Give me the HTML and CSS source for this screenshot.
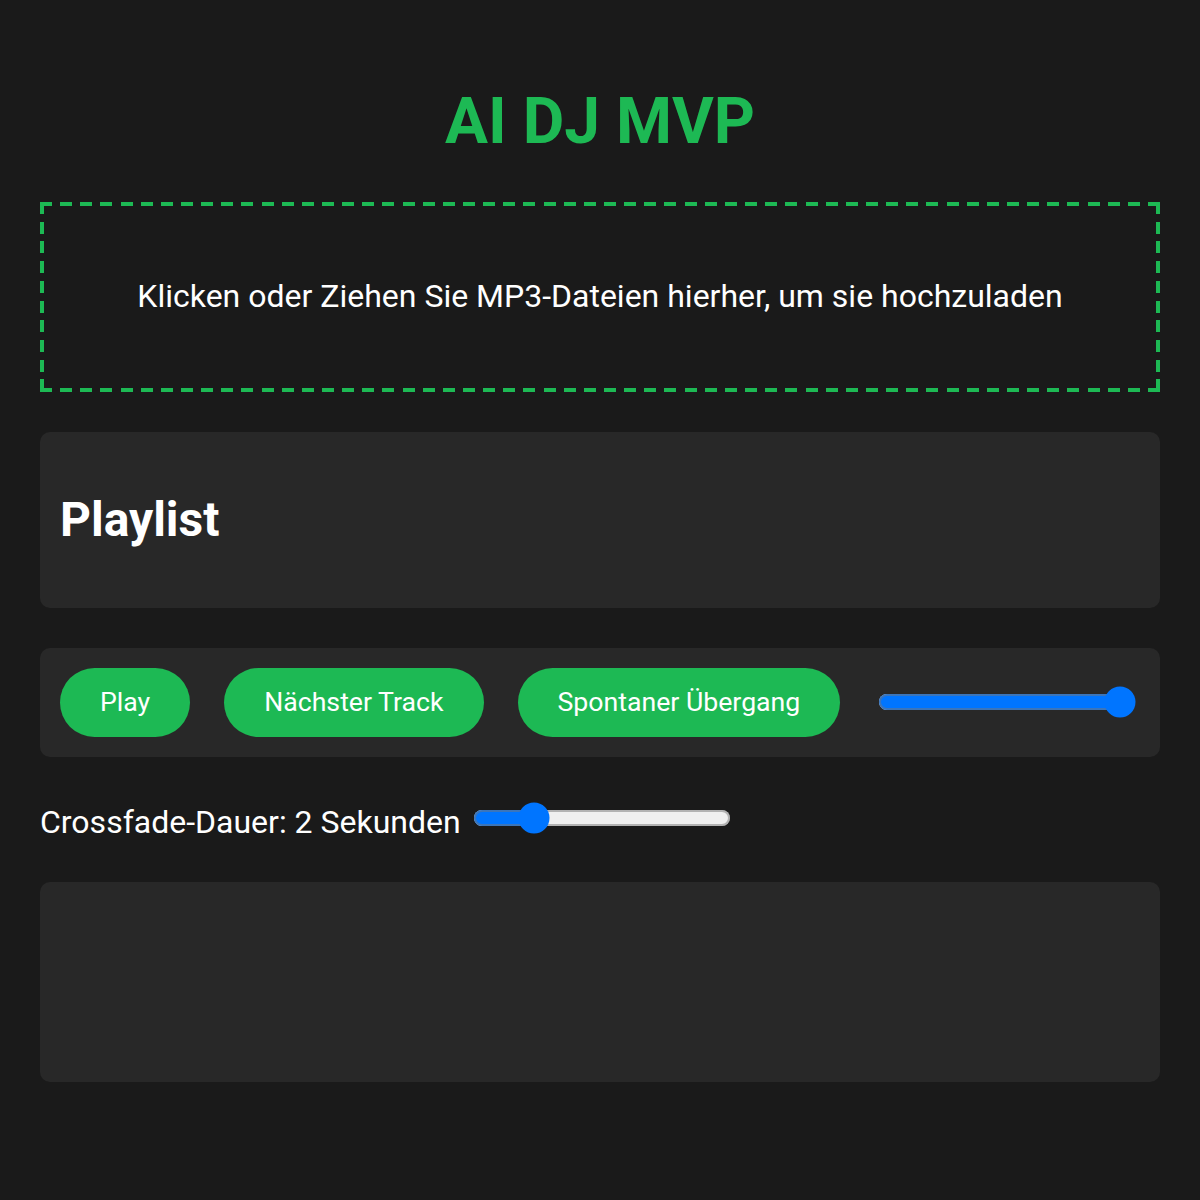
FILE: index.html
```html
<!DOCTYPE html>
<html lang="de">
<head>
<meta charset="utf-8">
<title>AI DJ MVP</title>
<link rel="stylesheet" href="styles.css">
</head>
<body>
<div class="app">
  <h1 class="title">AI DJ MVP</h1>
  <div class="dropzone">
    <p class="dropzone-text">Klicken oder Ziehen Sie MP3-Dateien hierher, um sie hochzuladen</p>
  </div>
  <section class="panel playlist">
    <h2 class="panel-title">Playlist</h2>
    <ul class="track-list"></ul>
  </section>
  <div class="panel controls">
    <button class="btn">Play</button>
    <button class="btn">Nächster Track</button>
    <button class="btn">Spontaner Übergang</button>
    <input class="range" type="range" min="0" max="1" step="0.01" value="1">
  </div>
  <div class="crossfade">
    <label class="crossfade-label">Crossfade-Dauer: 2 Sekunden</label>
    <input class="range crossfade-range" type="range" min="0" max="10" value="2">
  </div>
  <div class="panel visualizer"></div>
</div>
</body>
</html>
```
FILE: styles.css
```css
body {
  margin: 0;
  background: #1a1a1a;
  color: #ffffff;
  font-family: Roboto, "Noto Sans", "Liberation Sans", sans-serif;
  font-size: 32px;
}

.app {
  padding: 40px;
}

.title {
  margin: 44px 0 43px;
  font-size: 64px;
  line-height: 75px;
  font-weight: 700;
  color: #1db954;
  text-align: center;
}

.dropzone {
  padding: 44px;
  text-align: center;
  margin-bottom: 40px;
  background:
    repeating-linear-gradient(to right, #1db954 0 12px, transparent 12px 20.145px) left top / 100% 4px no-repeat,
    repeating-linear-gradient(to right, #1db954 0 12px, transparent 12px 20.145px) left bottom / 100% 4px no-repeat,
    repeating-linear-gradient(to bottom, #1db954 0 12px, transparent 12px 19.72px) left top / 4px 100% no-repeat,
    repeating-linear-gradient(to bottom, #1db954 0 12px, transparent 12px 19.72px) right top / 4px 100% no-repeat;
}

.dropzone-text {
  margin: 32px 0;
  line-height: 37.5px;
}

.panel {
  background: #282828;
  border-radius: 10px;
  margin-bottom: 40px;
}

.playlist {
  padding: 20px;
}

.panel-title {
  margin: 40px 0;
  font-size: 48px;
  line-height: 56px;
  font-weight: 700;
}

.track-list {
  margin: 0;
  padding: 0;
  list-style: none;
}

.controls {
  display: flex;
  align-items: center;
  gap: 34px;
  padding: 20px;
}

.btn {
  flex-shrink: 0;
  white-space: nowrap;
  background: #1db954;
  color: #ffffff;
  border: none;
  border-radius: 50px;
  padding: 19px 40px;
  font-family: inherit;
  font-size: 26.67px;
  line-height: 31.5px;
  cursor: pointer;
}

.range {
  flex-shrink: 0;
  zoom: 2;
  width: 129px;
  margin: 2px;
}

.crossfade {
  display: flex;
  align-items: flex-start;
  gap: 8px;
  margin-bottom: 40px;
}

.crossfade-label {
  margin-top: 7px;
  line-height: 37.5px;
}

.crossfade-range {
  margin-top: 2.5px;
}

.visualizer {
  height: 200px;
}
```
